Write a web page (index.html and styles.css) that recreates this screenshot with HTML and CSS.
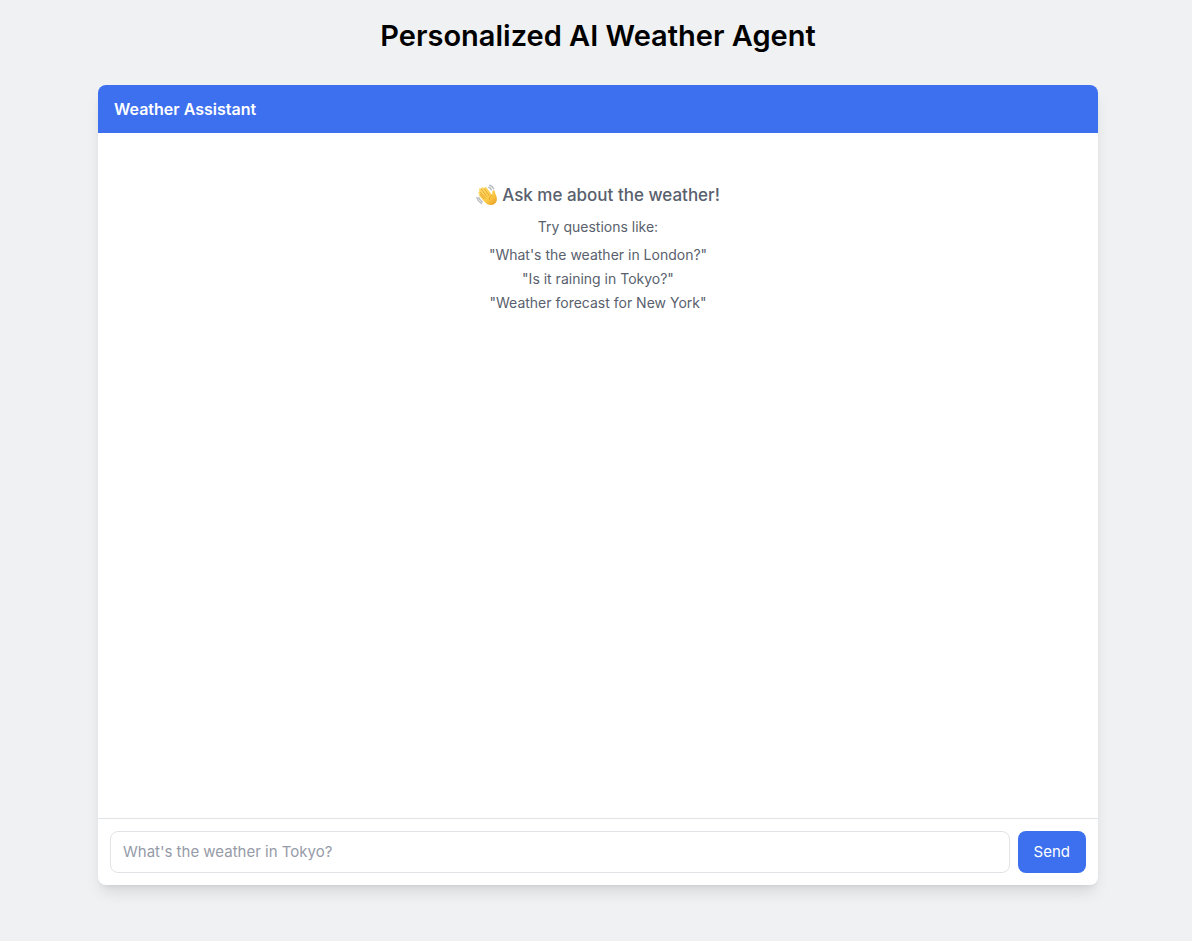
FILE: index.html
```html
<!DOCTYPE html>
<html lang="en">
<head>
<meta charset="utf-8">
<meta name="viewport" content="width=device-width, initial-scale=1">
<title>Personalized AI Weather Agent</title>
<link rel="stylesheet" href="styles.css">
</head>
<body>
<main class="page">
  <h1 class="page-title">Personalized AI Weather Agent</h1>
  <section class="chat">
    <header class="chat-header">
      <h2 class="chat-title">Weather Assistant</h2>
    </header>
    <div class="messages">
      <p class="welcome">
        <svg class="wave" viewBox="0 0 22 22" aria-hidden="true">
          <defs>
            <linearGradient id="skin" x1="0" y1="0" x2="1" y2="1">
              <stop offset="0" stop-color="#ffdc6e"/>
              <stop offset="0.6" stop-color="#fcca46"/>
              <stop offset="1" stop-color="#e89a20"/>
            </linearGradient>
          </defs>
          <g fill="none" stroke="#b9bcc0" stroke-width="1.5" stroke-linecap="round">
            <path d="M13.8 1.2Q16.6 2 17.6 4.8M12.8 3.3Q14.6 4 15.3 5.8"/>
            <path d="M.9 13.6Q2 17.2 5.4 19.4M2.9 13.8Q4 16.4 6.2 17.8"/>
          </g>
          <path fill="url(#skin)" d="M2.4 9.3C1.6 8.2 3.2 6.9 4.2 7.9L3.1 6.2C2.3 4.8 4.1 3.6 5.1 4.9L5.4 5.3C4.5 3.7 6.4 2.3 7.5 3.7L8.3 4.7C7.7 3.3 9.5 2.2 10.5 3.6L16 11.1C16.8 10 15.7 8.3 16.6 6.9C17.4 5.6 19 6.2 19 7.8C19 10 21 12.2 20.9 15.2C20.8 19 17.7 21.2 14.2 21C10.8 20.8 8.8 18.4 7.1 16.3L3.3 11.9C2.2 10.7 3.4 9.6 4.2 10.2Z"/>
          <path fill="none" stroke="#dc9a2a" stroke-width=".7" stroke-linecap="round" d="M8.3 4.7L12.7 10.8M5.1 4.9L10.6 12.3M4.2 7.9L9.2 14.1M4.2 10.2L8 14.8M16 11.1C14.1 11.8 13.2 13.2 13.5 15.2"/>
        </svg>
        <span>Ask me about the weather!</span>
      </p>
      <p class="hint">Try questions like:</p>
      <ul class="examples">
        <li>"What's the weather in London?"</li>
        <li>"Is it raining in Tokyo?"</li>
        <li>"Weather forecast for New York"</li>
      </ul>
    </div>
    <form class="composer">
      <input class="composer-input" type="text" aria-label="Message" placeholder="What's the weather in Tokyo?">
      <button class="send" type="submit">Send</button>
    </form>
  </section>
</main>
</body>
</html>
```
FILE: styles.css
```css
* {
  box-sizing: border-box;
  margin: 0;
  padding: 0;
}

body {
  background: #f0f1f3;
  color: #000;
  font-family: Inter, "Liberation Sans", sans-serif;
  font-size: 16px;
  line-height: 24px;
}

.page {
  display: flex;
  flex-direction: column;
  align-items: center;
  min-height: 100vh;
  padding: 16px 16px 56px 20px;
}

.page-title {
  margin-bottom: 29px;
  font-size: 29px;
  font-weight: 600;
  line-height: 40px;
  text-align: center;
}

.chat {
  display: flex;
  flex: 1;
  flex-direction: column;
  width: 100%;
  max-width: 1000px;
  overflow: hidden;
  border-radius: 8px;
  background: #fff;
  box-shadow: 0 10px 15px -3px rgb(0 0 0 / 10%), 0 4px 6px -4px rgb(0 0 0 / 10%);
}

.chat-header {
  padding: 12px 16px;
  background: #3d70ef;
  color: #fff;
}

.chat-title {
  font-size: 16px;
  font-weight: 600;
  line-height: 24px;
}

.messages {
  flex: 1;
  padding: 48px 16px 16px;
  color: #595f6d;
  font-size: 14px;
  text-align: center;
}

.welcome {
  display: flex;
  align-items: center;
  justify-content: center;
  gap: 4px;
  margin-bottom: 8px;
  font-size: 17px;
  font-weight: 500;
  line-height: 28px;
}

.wave {
  width: 22px;
  height: 22px;
}

.hint {
  margin-bottom: 8px;
  line-height: 20px;
}

.examples {
  display: grid;
  gap: 4px;
  line-height: 20px;
  list-style: none;
}

.composer {
  display: flex;
  gap: 8px;
  padding: 12px;
  border-top: 1px solid #e1e3e6;
  font-size: 15px;
}

.composer-input {
  flex: 1;
  min-width: 0;
  padding: 8px 12px;
  border: 1px solid #e1e3e6;
  border-radius: 8px;
  background: #fff;
  color: #000;
  font: inherit;
}

.composer-input::placeholder {
  color: #969ba8;
  opacity: 1;
}

.send {
  padding: 8px 16px;
  border: 0;
  border-radius: 8px;
  background: #3d70ef;
  color: #fff;
  font: inherit;
  cursor: pointer;
}
```
